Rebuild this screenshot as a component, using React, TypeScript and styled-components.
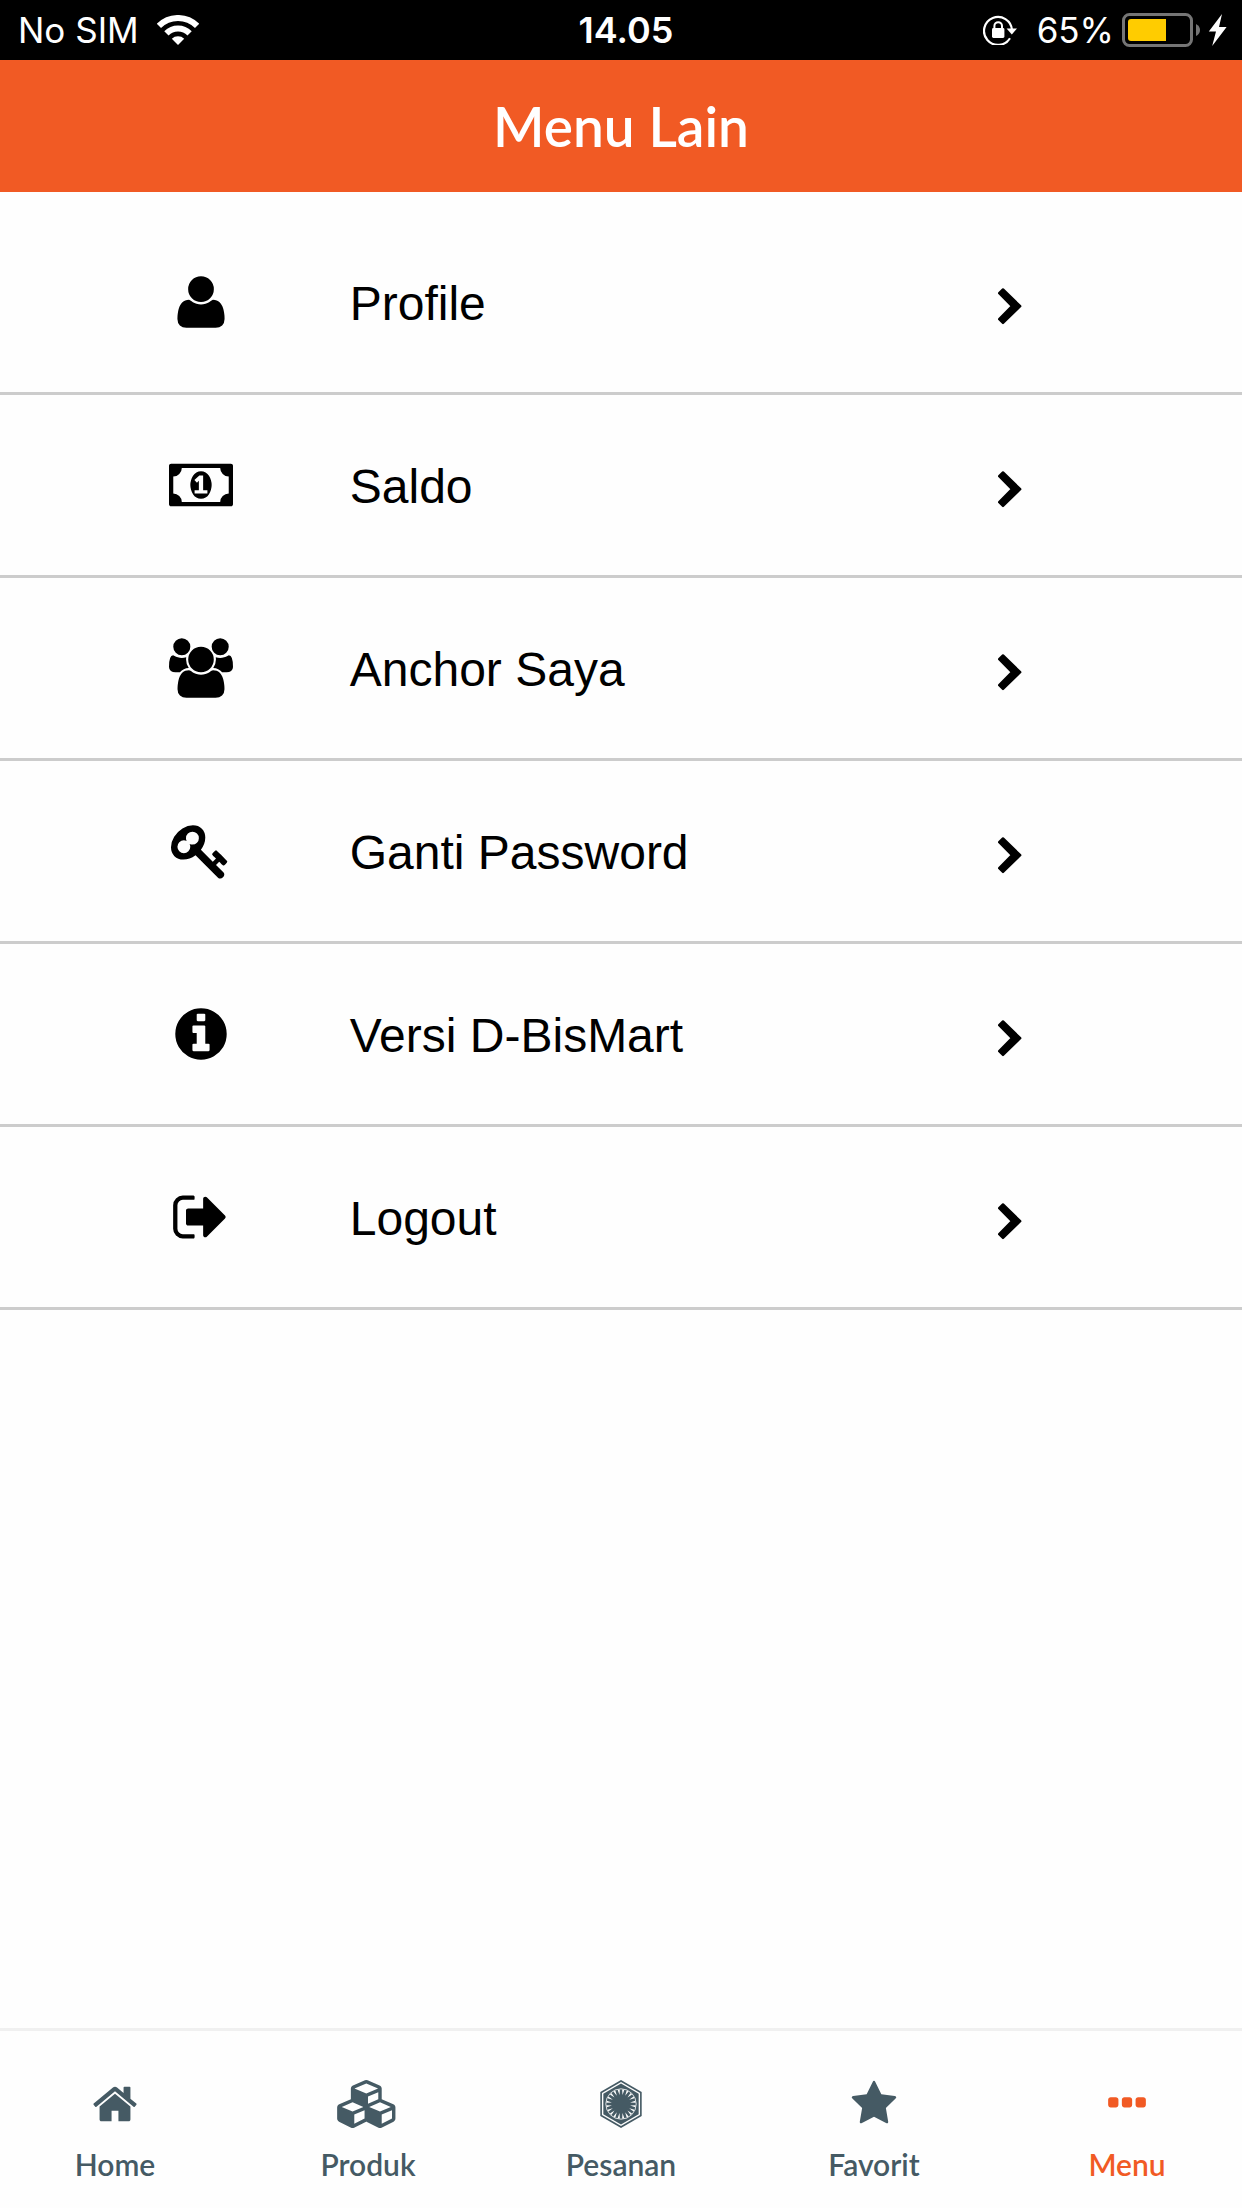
import React from "react";
import styled, { createGlobalStyle } from "styled-components";

const ORANGE = "#f15a24";
const SLATE = "#455a64";

const GlobalStyle = createGlobalStyle`
  * { box-sizing: border-box; }
  body { margin: 0; background: #fefefe; }
`;

const Screen = styled.div`
  display: flex;
  flex-direction: column;
  min-height: 100vh;
  color: #000;
  font-family: "Liberation Sans", Arial, sans-serif;
`;

const StatusBar = styled.div`
  display: grid;
  grid-template-columns: 1fr auto 1fr;
  align-items: center;
  height: 60px;
  padding: 0 8px 0 18px;
  background: #000;
  color: #fff;
  font-family: Inter, sans-serif;
  font-size: 35px;
  line-height: 40px;
`;

const StatusGroup = styled.div<{ $end?: boolean }>`
  display: flex;
  align-items: center;
  justify-content: ${(p) => (p.$end ? "flex-end" : "flex-start")};
  gap: ${(p) => (p.$end ? "8px" : "18px")};
  white-space: nowrap;

  svg { display: block; flex: none; }
`;

const Clock = styled.time`
  font-size: 36px;
  font-weight: 600;
`;

const LockSlot = styled.span`
  margin-right: 12px;
`;

const Header = styled.header`
  display: flex;
  align-items: center;
  justify-content: center;
  height: 132px;
  background: ${ORANGE};
`;

const Title = styled.h1`
  margin: 0;
  color: #fff;
  font-family: Lato, sans-serif;
  font-size: 55px;
  font-weight: 600;
  line-height: 64px;
`;

const Main = styled.main`
  flex: 1;
  padding-top: 20px;
`;

const List = styled.ul`
  margin: 0;
  padding: 0;
  list-style: none;
`;

const Item = styled.li`
  border-bottom: 3px solid #ccc;
`;

const RowLink = styled.a`
  display: grid;
  grid-template-columns: 28% 1fr 20%;
  align-items: center;
  height: 180px;
  color: inherit;
  text-decoration: none;
`;

const RowIcon = styled.span`
  display: flex;
  justify-content: center;
  padding-left: 54px;
`;

const RowLabel = styled.span`
  padding: 4px 0 0 2px;
  font-size: 48px;
  line-height: 56px;
`;

const RowArrow = styled.span`
  display: flex;
  padding-top: 8px;
`;

const TabBar = styled.nav`
  display: grid;
  grid-template-columns: repeat(5, 1fr);
  column-gap: 23px;
  padding: 49px 0 26px;
  border-top: 3px solid #f0f0f0;
`;

const Tab = styled.a<{ $active?: boolean }>`
  display: flex;
  flex-direction: column;
  align-items: center;
  gap: 18px;
  color: ${(p) => (p.$active ? ORANGE : SLATE)};
  font-family: Lato, sans-serif;
  font-size: 30px;
  font-weight: 600;
  line-height: 36px;
  text-decoration: none;
`;

const Glyph = styled.svg`
  display: block;
  flex: none;
  fill: currentColor;
`;

type IconDef = { width: number; path: string };

const ICONS: Record<string, IconDef> = {
  user: {
    width: 1792,
    path: "M1600 1405q0 120-73 189.5t-194 69.5h-874q-121 0-194-69.5t-73-189.5q0-53 3.5-103.5t14-109 26.5-108.5 43-97.5 62-81 85.5-53.5 111.5-20q9 0 42 21.5t74.5 48 108 48 133.5 21.5 133.5-21.5 108-48 74.5-48 42-21.5q61 0 111.5 20t85.5 53.5 62 81 43 97.5 26.5 108.5 14 109 3.5 103.5zm-320-893q0 159-112.5 271.5t-271.5 112.5-271.5-112.5-112.5-271.5 112.5-271.5 271.5-112.5 271.5 112.5 112.5 271.5z",
  },
  money: {
    width: 1920,
    path: "M768 1152h384v-96h-128v-448h-114l-148 137 77 80q42-37 55-57h2v288h-128v96zm512-256q0 70-21 142t-59.5 134-101.5 101-138 39-138-39-101.5-101-59.5-134-21-142 21-142 59.5-134 101.5-101 138-39 138 39 101.5 101 59.5 134 21 142zm512 256v-512q-106 0-181-75t-75-181h-1152q0 106-75 181t-181 75v512q106 0 181 75t75 181h1152q0-106 75-181t181-75zm128-832v1152q0 26-19 45t-45 19h-1792q-26 0-45-19t-19-45v-1152q0-26 19-45t45-19h1792q26 0 45 19t19 45z",
  },
  users: {
    width: 1920,
    path: "M593 896q-162 5-265 128h-134q-82 0-138-40.5t-56-118.5q0-353 124-353 6 0 43.5 21t97.5 42.5 119 21.5q67 0 133-23-5 37-5 66 0 139 81 256zm1071 637q0 120-73 189.5t-194 69.5h-874q-121 0-194-69.5t-73-189.5q0-53 3.5-103.5t14-109 26.5-108.5 43-97.5 62-81 85.5-53.5 111.5-20q10 0 43 21.5t73 48 107 48 135 21.5 135-21.5 107-48 73-48 43-21.5q61 0 111.5 20t85.5 53.5 62 81 43 97.5 26.5 108.5 14 109 3.5 103.5zm-1024-1277q0 106-75 181t-181 75-181-75-75-181 75-181 181-75 181 75 75 181zm704 384q0 159-112.5 271.5t-271.5 112.5-271.5-112.5-112.5-271.5 112.5-271.5 271.5-112.5 271.5 112.5 112.5 271.5zm576 225q0 78-56 118.5t-138 40.5h-134q-103-123-265-128 81-117 81-256 0-29-5-66 66 23 133 23 59 0 119-21.5t97.5-42.5 43.5-21q124 0 124 353zm-128-609q0 106-75 181t-181 75-181-75-75-181 75-181 181-75 181 75 75 181z",
  },
  key: {
    width: 1792,
    path: "M832 512q0-80-56-136t-136-56-136 56-56 136q0 42 19 83-41-19-83-19-80 0-136 56t-56 136 56 136 136 56 136-56 56-136q0-42-19-83 41 19 83 19 80 0 136-56t56-136zm851 704q0 17-49 66t-66 49q-9 0-28.5-16t-36.5-33-38.5-40-24.5-26l-96 96 220 220q28 28 28 68 0 42-39 81t-81 39q-40 0-68-28l-671-671q-176 131-365 131-163 0-265.5-102.5t-102.5-265.5q0-160 95-313t248-248 313-95q163 0 265.5 102.5t102.5 265.5q0 189-131 365l355 355 96-96q-3-3-26-24.5t-40-38.5-33-36.5-16-28.5q0-17 49-66t66-49q13 0 23 10 6 6 46 44.5t82 79.5 86.5 86 73 78 28.5 41z",
  },
  info: {
    width: 1792,
    path: "M1152 1376v-160q0-14-9-23t-23-9h-96v-512q0-14-9-23t-23-9h-320q-14 0-23 9t-9 23v160q0 14 9 23t23 9h96v320h-96q-14 0-23 9t-9 23v160q0 14 9 23t23 9h448q14 0 23-9t9-23zm-128-896v-160q0-14-9-23t-23-9h-192q-14 0-23 9t-9 23v160q0 14 9 23t23 9h192q14 0 23-9t9-23zm640 416q0 209-103 385.5t-279.5 279.5-385.5 103-385.5-103-279.5-279.5-103-385.5 103-385.5 279.5-279.5 385.5-103 385.5 103 279.5 279.5 103 385.5z",
  },
  signOut: {
    width: 1664,
    path: "M640 1440q0 4 1 20t.5 26.5-3 23.5-10 19.5-20.5 6.5h-320q-119 0-203.5-84.5t-84.5-203.5v-704q0-119 84.5-203.5t203.5-84.5h320q13 0 22.5 9.5t9.5 22.5q0 4 1 20t.5 26.5-3 23.5-10 19.5-20.5 6.5h-320q-66 0-113 47t-47 113v704q0 66 47 113t113 47h312l11.5 1 11.5 3 8 5.5 7 9 2 13.5zm928-544q0 26-19 45l-544 544q-19 19-45 19t-45-19-19-45v-288h-448q-26 0-45-19t-19-45v-384q0-26 19-45t45-19h448v-288q0-26 19-45t45-19 45 19l544 544q19 19 19 45z",
  },
  home: {
    width: 1792,
    path: "M1472 992v480q0 26-19 45t-45 19h-384v-384h-256v384h-384q-26 0-45-19t-19-45v-480q0-1 .5-3t.5-3l575-474 575 474q1 2 1 6zm223-69l-62 74q-8 9-21 11h-3q-13 0-21-7l-692-577-692 577q-12 8-24 7-13-2-21-11l-62-74q-8-10-7-23.5t11-21.5l719-599q32-26 76-26t76 26l244 204v-195q0-14 9-23t23-9h192q14 0 23 9t9 23v408l219 182q10 8 11 21.5t-7 23.5z",
  },
  cubes: {
    width: 2304,
    path: "M640 1632l384-192v-314l-384 164v342zm-64-454l404-173-404-173-404 173zm1088 454l384-192v-314l-384 164v342zm-64-454l404-173-404-173-404 173zm-448-293l384-165v-266l-384 164v267zm-64-379l441-189-441-189-441 189zm1088 518v416q0 36-19 67t-52 47l-448 224q-25 14-57 14t-57-14l-448-224q-4-2-7-4-2 2-7 4l-448 224q-25 14-57 14t-57-14l-448-224q-33-16-52-47t-19-67v-416q0-38 21.5-70t56.5-48l434-186v-400q0-38 21.5-70t56.5-48l448-192q23-10 50-10t50 10l448 192q35 16 56.5 48t21.5 70v400l434 186q36 16 57 48t21 70z",
  },
  star: {
    width: 1792,
    path: "M1728 647q0 22-26 48l-363 354 86 500q1 7 1 20 0 21-10.5 35.5t-30.5 14.5q-19 0-40-12l-449-236-449 236q-22 12-40 12-21 0-31.5-14.5t-10.5-35.5q0-6 2-20l86-500-364-354q-25-27-25-48 0-37 56-46l502-73 225-455q19-41 49-41t49 41l225 455 502 73q56 9 56 46z",
  },
  dots: {
    width: 1792,
    path: "M576 736v192q0 40-28 68t-68 28h-192q-40 0-68-28t-28-68v-192q0-40 28-68t68-28h192q40 0 68 28t28 68zm512 0v192q0 40-28 68t-68 28h-192q-40 0-68-28t-28-68v-192q0-40 28-68t68-28h192q40 0 68 28t28 68zm512 0v192q0 40-28 68t-68 28h-192q-40 0-68-28t-28-68v-192q0-40 28-68t68-28h192q40 0 68 28t28 68z",
  },
};

function Icon({ name, size }: { name: string; size: number }) {
  const { width, path } = ICONS[name];
  return (
    <Glyph
      viewBox={`0 0 ${width} 1792`}
      width={Math.round((width / 1792) * size)}
      height={size}
      aria-hidden="true"
    >
      <path d={path} />
    </Glyph>
  );
}

const hexagon = (r: number) =>
  Array.from({ length: 6 }, (_, i) => {
    const a = (Math.PI / 3) * i - Math.PI / 2;
    return `${24 + r * Math.cos(a)},${24 + r * Math.sin(a)}`;
  }).join(" ");

const SPIKES = Array.from({ length: 20 }, (_, i) => i * 18 + 9);

function Emblem() {
  return (
    <Glyph viewBox="0 0 48 48" width={48} height={48} aria-hidden="true">
      <polygon points={hexagon(23.9)} />
      <polygon points={hexagon(22)} fill="#fefefe" />
      <polygon points={hexagon(20.4)} />
      <circle cx="24" cy="24" r="15.2" fill="none" stroke="#fefefe" strokeWidth="0.8" />
      {SPIKES.map((deg) => (
        <path
          key={deg}
          d="M22.9 9.4 L25.1 9.4 L24 14.8 Z"
          fill="#fefefe"
          transform={`rotate(${deg} 24 24)`}
        />
      ))}
    </Glyph>
  );
}

function Chevron() {
  return (
    <Glyph viewBox="0 0 32 40" width={32} height={40} aria-hidden="true">
      <path
        d="M9 3.4 L26.2 20.2 L9 37 L5.2 33.2 L18 20.2 L5.2 7.2 Z"
        stroke="currentColor"
        strokeWidth="2.4"
        strokeLinejoin="round"
      />
    </Glyph>
  );
}

function Wifi() {
  return (
    <svg viewBox="0 0 42 30" width="42" height="30" aria-hidden="true">
      <g fill="none" stroke="#fff" strokeWidth="6">
        <path d="M1.9 10.9 A27 27 0 0 1 40.1 10.9" />
        <path d="M9.4 18.4 A16.4 16.4 0 0 1 32.6 18.4" />
      </g>
      <path d="M21 30 L14.8 23.8 A9 9 0 0 1 27.2 23.8 Z" fill="#fff" />
    </svg>
  );
}

function RotationLock() {
  return (
    <svg viewBox="0 0 34 30" width="34" height="30" aria-hidden="true">
      <path d="M27 23.2 A14 14 0 1 1 29 15" fill="none" stroke="#fff" strokeWidth="2.2" />
      <path d="M23.6 13.6 H34 L28.8 19.4 Z" fill="#fff" />
      <rect x="9" y="13" width="12.4" height="10" rx="1.4" fill="#fff" />
      <path d="M11.4 14 V11 A3.8 3.8 0 0 1 19 11 V14" fill="none" stroke="#fff" strokeWidth="2" />
    </svg>
  );
}

function Battery() {
  return (
    <svg viewBox="0 0 78 34" width="78" height="34" aria-hidden="true">
      <rect x="1.5" y="1.5" width="68" height="31" rx="6" fill="none" stroke="#757575" strokeWidth="3" />
      <path d="M44 6 V28 H9 A3 3 0 0 1 6 25 V9 A3 3 0 0 1 9 6 Z" fill="#fc0" />
      <path d="M74 11 Q78 13 78 17 Q78 21 74 23 Z" fill="#757575" />
    </svg>
  );
}

function Bolt() {
  return (
    <svg viewBox="0 0 26 34" width="26" height="34" aria-hidden="true">
      <path d="M14 1 L0.8 18.6 H8 L4.2 33 L18.6 14 H11 Z" fill="#fff" />
    </svg>
  );
}

const MENU = [
  { icon: "user", label: "Profile" },
  { icon: "money", label: "Saldo" },
  { icon: "users", label: "Anchor Saya" },
  { icon: "key", label: "Ganti Password" },
  { icon: "info", label: "Versi D-BisMart" },
  { icon: "signOut", label: "Logout" },
];

const TABS = [
  { icon: "home", label: "Home" },
  { icon: "cubes", label: "Produk" },
  { icon: "emblem", label: "Pesanan" },
  { icon: "star", label: "Favorit" },
  { icon: "dots", label: "Menu", active: true },
];

export default function App() {
  return (
    <Screen>
      <GlobalStyle />
      <StatusBar>
        <StatusGroup>
          <span>No SIM</span>
          <Wifi />
        </StatusGroup>
        <Clock>14.05</Clock>
        <StatusGroup $end>
          <LockSlot>
            <RotationLock />
          </LockSlot>
          <span>65%</span>
          <Battery />
          <Bolt />
        </StatusGroup>
      </StatusBar>
      <Header>
        <Title>Menu Lain</Title>
      </Header>
      <Main>
        <List>
          {MENU.map(({ icon, label }) => (
            <Item key={label}>
              <RowLink href="#">
                <RowIcon>
                  <Icon name={icon} size={60} />
                </RowIcon>
                <RowLabel>{label}</RowLabel>
                <RowArrow>
                  <Chevron />
                </RowArrow>
              </RowLink>
            </Item>
          ))}
        </List>
      </Main>
      <TabBar>
        {TABS.map(({ icon, label, active }) => (
          <Tab key={label} href="#" $active={active} aria-current={active ? "page" : undefined}>
            {icon === "emblem" ? <Emblem /> : <Icon name={icon} size={48} />}
            <span>{label}</span>
          </Tab>
        ))}
      </TabBar>
    </Screen>
  );
}
